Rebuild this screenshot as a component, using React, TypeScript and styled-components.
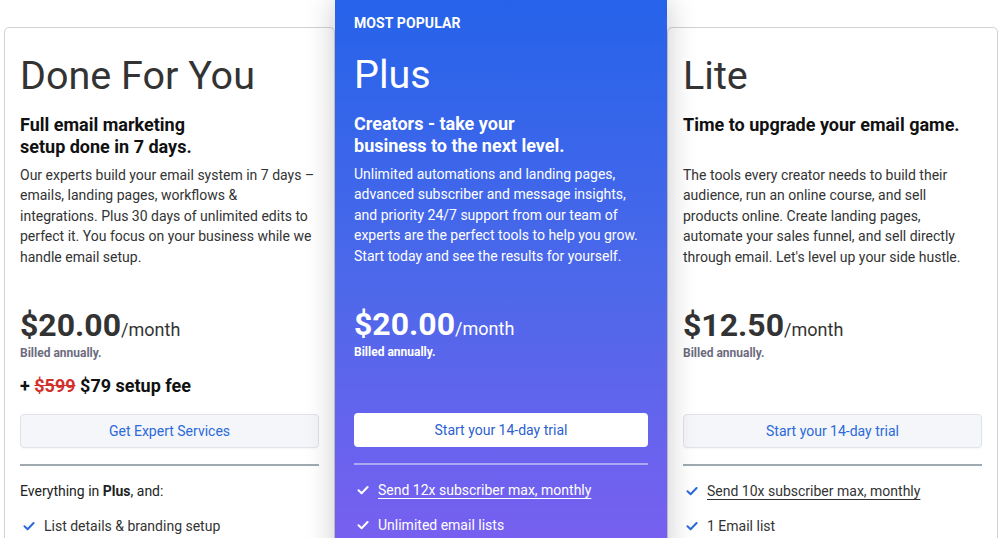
import React from "react";
import styled, { createGlobalStyle, css } from "styled-components";

const GlobalStyle = createGlobalStyle`
  html, body {
    margin: 0;
    padding: 0;
    background: #fff;
    overflow: hidden;
    font-family: Roboto, "Liberation Sans", Arial, sans-serif;
  }
`;

type Plan = {
  key: string;
  featured?: boolean;
  name: string;
  tagline: React.ReactNode;
  desc: string[];
  price: string;
  setupFee?: boolean;
  cta: string;
  intro?: React.ReactNode;
  items: { text: string; underline?: boolean }[];
};

const plans: Plan[] = [
  {
    key: "dfy",
    name: "Done For You",
    tagline: (
      <>
        Full email marketing
        <br />
        setup done in 7 days.
      </>
    ),
    desc: [
      "Our experts build your email system in 7 days –",
      "emails, landing pages, workflows &",
      "integrations. Plus 30 days of unlimited edits to",
      "perfect it. You focus on your business while we",
      "handle email setup.",
    ],
    price: "$20.00",
    setupFee: true,
    cta: "Get Expert Services",
    intro: (
      <>
        Everything in{" "}<b>Plus</b>, and:
      </>
    ),
    items: [{ text: "List details & branding setup" }],
  },
  {
    key: "plus",
    featured: true,
    name: "Plus",
    tagline: (
      <>
        Creators - take your
        <br />
        business to the next level.
      </>
    ),
    desc: [
      "Unlimited automations and landing pages,",
      "advanced subscriber and message insights,",
      "and priority 24/7 support from our team of",
      "experts are the perfect tools to help you grow.",
      "Start today and see the results for yourself.",
    ],
    price: "$20.00",
    cta: "Start your 14-day trial",
    items: [
      { text: "Send 12x subscriber max, monthly", underline: true },
      { text: "Unlimited email lists" },
    ],
  },
  {
    key: "lite",
    name: "Lite",
    tagline: "Time to upgrade your email game.",
    desc: [
      "The tools every creator needs to build their",
      "audience, run an online course, and sell",
      "products online. Create landing pages,",
      "automate your sales funnel, and sell directly",
      "through email. Let's level up your side hustle.",
    ],
    price: "$12.50",
    cta: "Start your 14-day trial",
    items: [
      { text: "Send 10x subscriber max, monthly", underline: true },
      { text: "1 Email list" },
    ],
  },
];

const Page = styled.div`
  display: flex;
  align-items: flex-start;
  padding: 0 2px 0 4px;
`;

const Card = styled.section<{ $featured?: boolean }>`
  min-width: 0;
  box-sizing: border-box;
  color: #333;
  ${({ $featured }) =>
    $featured
      ? css`
          flex: 0 0 332px;
          position: relative;
          z-index: 2;
          height: 560px;
          padding: 15px 19px 0;
          color: #fff;
          background: linear-gradient(180deg, #2563ea 0%, #4e68ea 52%, #7b5ff1 100%);
          box-shadow: 0 0 28px rgba(0, 0, 0, 0.22);
        `
      : css`
          flex: 1 1 0;
          margin-top: 27px;
          height: 540px;
          padding: 26px 15px 0;
          background: #fff;
          border: 1px solid #d2d2d2;
          border-radius: 5px;
        `}
`;

const Badge = styled.div`
  font-size: 14px;
  line-height: 16px;
  font-weight: 700;
  text-transform: uppercase;
  letter-spacing: 0.1px;
  margin-bottom: 22px;
`;

const Title = styled.h2`
  margin: 0;
  font-size: 39.5px;
  line-height: 44px;
  font-weight: 400;
`;

const Tagline = styled.h3<{ $featured?: boolean }>`
  margin: 16px 0 0;
  min-height: 44px;
  font-size: 18px;
  line-height: 22px;
  font-weight: 700;
  color: ${({ $featured }) => ($featured ? "#fff" : "#111")};
`;

const Desc = styled.p`
  margin: 7px 0 0;
  font-size: 14px;
  line-height: 20.4px;
  height: 142px;
`;

const PriceArea = styled.div`
  height: 107px;
`;

const PriceLine = styled.div`
  display: flex;
  align-items: baseline;
  line-height: 36px;
`;

const Amount = styled.span`
  font-size: 32px;
  font-weight: 700;
`;

const Period = styled.span`
  font-size: 18px;
`;

const Billed = styled.div<{ $featured?: boolean }>`
  margin-top: -2px;
  font-size: 12px;
  line-height: 14px;
  font-weight: 700;
  color: ${({ $featured }) => ($featured ? "#fff" : "#6c6b7e")};
`;

const SetupFee = styled.div`
  margin-top: 15px;
  font-size: 18px;
  line-height: 22px;
  font-weight: 700;
  color: #111;

  s {
    color: #d0312d;
  }
`;

const Button = styled.button<{ $featured?: boolean }>`
  display: block;
  width: 100%;
  height: 34px;
  box-sizing: border-box;
  border-radius: 4px;
  font-family: inherit;
  font-size: 14px;
  cursor: pointer;
  ${({ $featured }) =>
    $featured
      ? css`
          background: #fff;
          border: none;
          color: #2c5fcf;
        `
      : css`
          background: #f4f6fa;
          border: 1px solid #e0e4ea;
          color: #2b6ad8;
          box-shadow: 0 1px 2px rgba(0, 0, 0, 0.04);
        `}
`;

const Divider = styled.hr<{ $featured?: boolean }>`
  margin: 16px 0 8px;
  border: none;
  height: 1.5px;
  background: ${({ $featured }) => ($featured ? "rgba(255,255,255,0.45)" : "#9fa9b0")};
`;

const List = styled.ul`
  list-style: none;
  margin: 0;
  padding: 0;
`;

const Intro = styled.li`
  height: 35px;
  display: flex;
  align-items: center;
  white-space: pre;
  font-size: 14px;
  color: #222;

  b {
    font-weight: 700;
  }
`;

const Item = styled.li`
  height: 35px;
  display: flex;
  align-items: center;
  gap: 9px;
  padding-left: 3px;
  font-size: 14px;
`;

const ItemText = styled.span<{ $underline?: boolean }>`
  text-decoration: ${({ $underline }) => ($underline ? "underline" : "none")};
  text-underline-offset: 3px;
`;

const Check = ({ color }: { color: string }) => (
  <svg width="12" height="12" viewBox="0 0 12 12" fill="none">
    <path d="M1.5 6.3 L4.6 9.2 L10.6 3" stroke={color} strokeWidth="2" strokeLinecap="round" strokeLinejoin="round" />
  </svg>
);

const PlanCard = ({ plan }: { plan: Plan }) => {
  const f = plan.featured;
  return (
    <Card $featured={f}>
      {f && <Badge>Most Popular</Badge>}
      <Title>{plan.name}</Title>
      <Tagline $featured={f}>{plan.tagline}</Tagline>
      <Desc>
        {plan.desc.map((line, i) => (
          <React.Fragment key={i}>
            {line}
            {i < plan.desc.length - 1 && <br />}
          </React.Fragment>
        ))}
      </Desc>
      <PriceArea>
        <PriceLine>
          <Amount>{plan.price}</Amount>
          <Period>/month</Period>
        </PriceLine>
        <Billed $featured={f}>Billed annually.</Billed>
        {plan.setupFee && (
          <SetupFee>
            + <s>$599</s> $79 setup fee
          </SetupFee>
        )}
      </PriceArea>
      <Button $featured={f}>{plan.cta}</Button>
      <Divider $featured={f} />
      <List>
        {plan.intro && <Intro>{plan.intro}</Intro>}
        {plan.items.map((it) => (
          <Item key={it.text}>
            <Check color={f ? "#fff" : "#2b6ad8"} />
            <ItemText $underline={it.underline}>{it.text}</ItemText>
          </Item>
        ))}
      </List>
    </Card>
  );
};

export default function App() {
  return (
    <>
      <GlobalStyle />
      <Page>
        {plans.map((p) => (
          <PlanCard key={p.key} plan={p} />
        ))}
      </Page>
    </>
  );
}
